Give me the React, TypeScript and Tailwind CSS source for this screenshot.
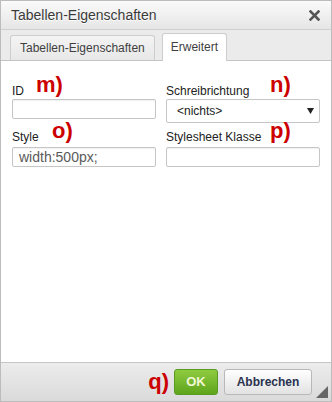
import type { ReactNode } from 'react';

function Mark({ children, className }: { children: ReactNode; className: string }) {
  return (
    <span className={`absolute text-[22px] font-bold leading-none text-[#cc0000] ${className}`}>
      {children}
    </span>
  );
}

function Field({ label, mark, markPos, children }: { label: string; mark: string; markPos: string; children: ReactNode }) {
  return (
    <div className="flex flex-col">
      <div className="relative h-[14px] text-[12px] leading-[14px] text-[#222]">
        {label}
        <Mark className={markPos}>{mark}</Mark>
      </div>
      {children}
    </div>
  );
}

const inputCls =
  'mt-[1px] h-[20px] w-full rounded-[2px] border border-[#c6c6c6] bg-white pl-[6px] text-[14px] leading-[19px] text-[#5a5a5a] shadow-[inset_0_1px_1px_rgba(0,0,0,0.06)]';

export default function App() {
  return (
    <div className="relative flex h-[402px] w-[332px] flex-col overflow-hidden border border-[#bcbcbc] bg-white font-['Liberation_Sans',Arial,sans-serif]">
      {/* Titel */}
      <div className="flex h-[29px] shrink-0 items-center justify-between border-b border-[#cfcfcf] bg-gradient-to-b from-[#fafafa] to-[#e6e6e6] pl-[10px] pr-[10px]">
        <span className="text-[14px] text-[#3a3a3a] [text-shadow:0_1px_0_#fff]">Tabellen-Eigenschaften</span>
        <svg width="11" height="11" viewBox="0 0 11 11" className="mr-[1px]">
          <path d="M1.5 1.5 L9.5 9.5 M9.5 1.5 L1.5 9.5" stroke="#555" strokeWidth="2.6" strokeLinecap="square" />
        </svg>
      </div>

      {/* Tabs */}
      <div className="flex h-[31px] shrink-0 items-end gap-[7px] border-b border-[#c4c4c4] bg-[#ebebeb] pl-[9px]">
        <div className="flex h-[25px] items-center rounded-t-[3px] border border-b-0 border-[#cdcdcd] bg-gradient-to-b from-[#f4f4f4] to-[#e8e8e8] px-[9px] text-[12px] text-[#3f3f3f]">
          Tabellen-Eigenschaften
        </div>
        <div className="-mb-[1px] flex h-[28px] items-center rounded-t-[3px] border border-b-0 border-[#cdcdcd] bg-white px-[8px] pb-[1px] text-[12px] text-[#3f3f3f]">
          Erweitert
        </div>
      </div>

      {/* Inhalt */}
      <div className="flex-1 border-b border-[#c6c6c6] bg-white pl-[11px] pr-[11px] pt-[23px]">
        <div className="grid grid-cols-[144px_154px] gap-x-[10px] gap-y-[7px]">
          <Field label="ID" mark="m)" markPos="left-[24px] -top-[10px]">
            <div className={inputCls} />
          </Field>
          <Field label="Schreibrichtung" mark="n)" markPos="left-[104px] -top-[10px]">
            <div className="mt-[1px] flex h-[24px] items-center justify-between rounded-[2px] border border-[#c6c6c6] bg-white pl-[10px] pr-[5px] text-[12px] text-[#222]">
              <span>&lt;nichts&gt;</span>
              <svg width="7" height="6" viewBox="0 0 7 6">
                <path d="M0 0 H7 L3.5 6 Z" fill="#222" />
              </svg>
            </div>
          </Field>
          <Field label="Style" mark="o)" markPos="left-[40px] -top-[10px]">
            <div className={`${inputCls} mt-[3px]`}>width:500px;</div>
          </Field>
          <Field label="Stylesheet Klasse" mark="p)" markPos="left-[104px] -top-[10px]">
            <div className={`${inputCls} mt-[3px]`} />
          </Field>
        </div>
      </div>

      {/* Fußleiste */}
      <div className="flex h-[38px] shrink-0 items-center justify-end gap-[6px] bg-gradient-to-b from-[#ececec] to-[#dadada] pr-[19px]">
        <span className="mr-[-1px] text-[22px] font-bold leading-none text-[#cc0000]">q)</span>
        <div className="flex h-[26px] w-[44px] items-center justify-center rounded-[3px] border border-[#5a9a22] bg-gradient-to-b from-[#8fcb3f] to-[#5ea51c] text-[13px] font-bold text-[#f2f8d6]">
          OK
        </div>
        <div className="flex h-[26px] w-[88px] items-center justify-center rounded-[3px] border border-[#b8b8b8] bg-gradient-to-b from-[#ffffff] to-[#e2e2e2] text-[12px] font-bold text-[#2a3350]">
          Abbrechen
        </div>
      </div>

      <svg width="12" height="12" viewBox="0 0 12 12" className="absolute bottom-[3px] right-[3px]">
        <path d="M12 0 V12 H0 Z" fill="#666" />
      </svg>
    </div>
  );
}
